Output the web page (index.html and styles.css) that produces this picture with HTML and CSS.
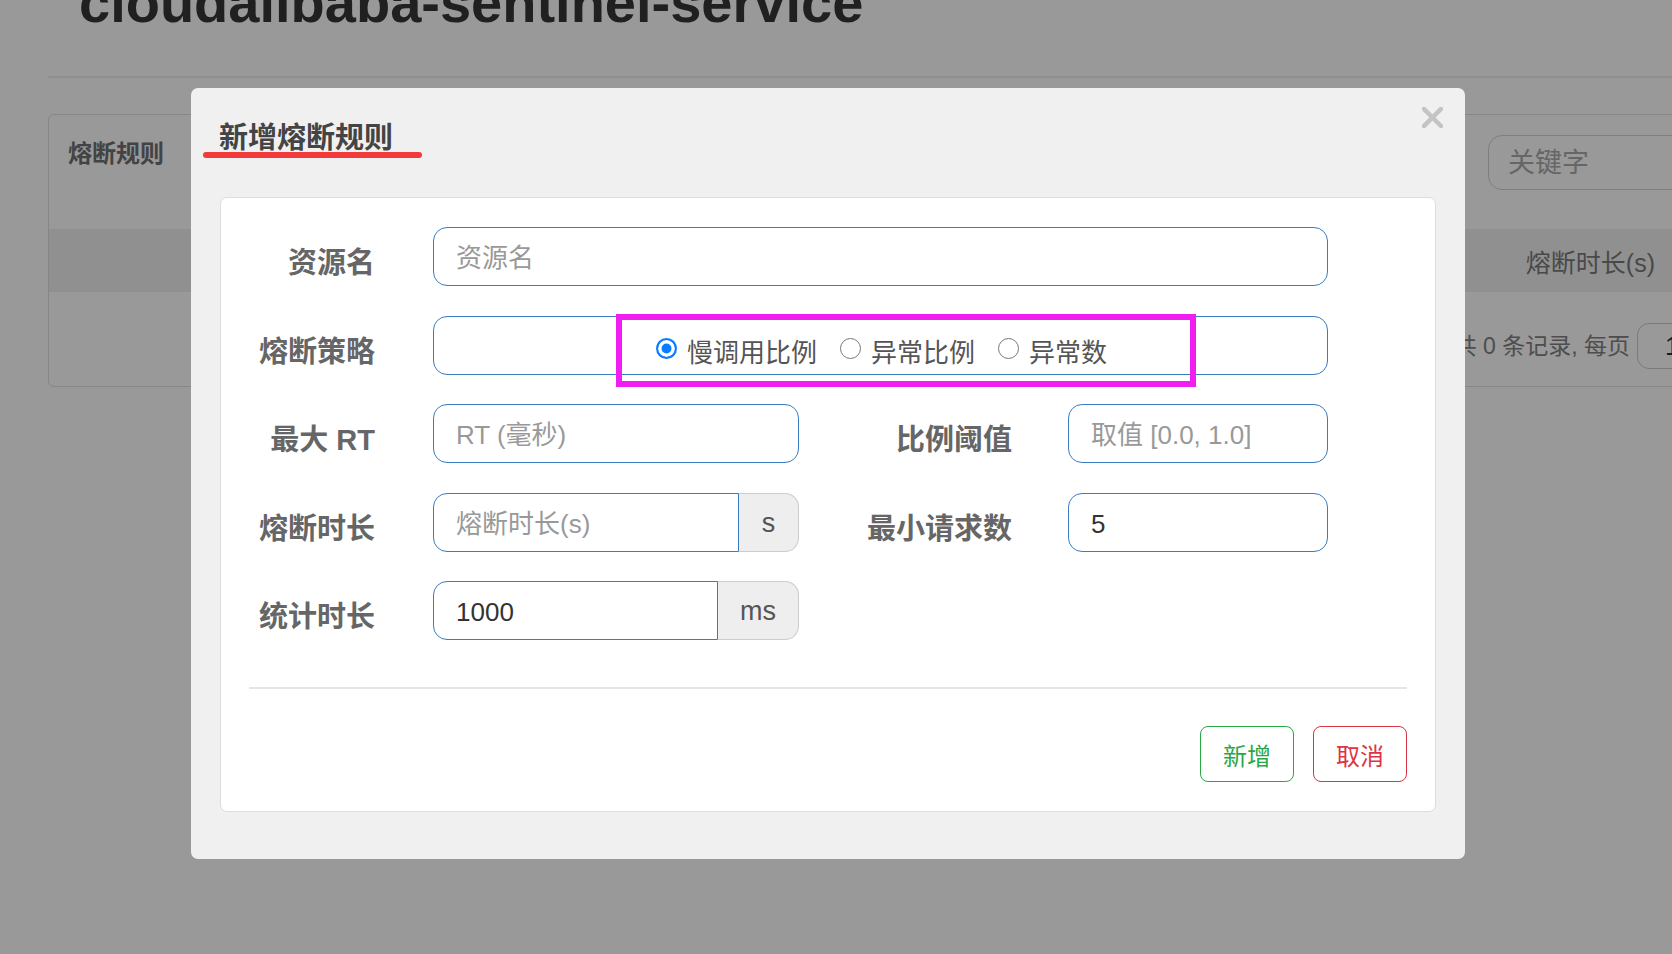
FILE: index.html
```html
<!DOCTYPE html>
<html lang="zh-CN">
<head>
<meta charset="utf-8">
<title>新增熔断规则</title>
<link rel="stylesheet" href="styles.css">
</head>
<body>
<div class="page">
  <h1 class="app-title">cloudalibaba-sentinel-service</h1>
  <div class="title-rule"></div>
  <div class="card">
    <div class="card-head">
      <span class="card-title">熔断规则</span>
      <div class="search">关键字</div>
    </div>
    <div class="table-head">
      <span class="th">熔断时长(s)</span>
    </div>
    <div class="table-foot">
      <span class="total">共 0 条记录, 每页</span>
      <span class="page-size">10</span>
    </div>
  </div>
</div>

<div class="backdrop"></div>

<div class="modal">
  <div class="modal-header">
    <h2 class="modal-title">新增熔断规则<span class="mark-underline"></span></h2>
    <button class="close" type="button" aria-label="关闭">
      <svg width="21" height="21" viewBox="0 0 21 21"><path d="M2 2 L19 19 M19 2 L2 19" stroke="#c4c4c4" stroke-width="4.5" stroke-linecap="square" fill="none"/></svg>
    </button>
  </div>
  <div class="modal-body">
    <div class="panel">
      <form class="rule-form">
        <label class="lbl">资源名</label>
        <div class="field wide"><input class="ctl" type="text" placeholder="资源名"></div>

        <label class="lbl">熔断策略</label>
        <div class="field wide radio-box">
          <label class="opt"><input type="radio" name="grade" checked><span>慢调用比例</span></label>
          <label class="opt"><input type="radio" name="grade"><span>异常比例</span></label>
          <label class="opt"><input type="radio" name="grade"><span>异常数</span></label>
          <span class="mark-box"></span>
        </div>

        <label class="lbl">最大 RT</label>
        <div class="field"><input class="ctl" type="text" placeholder="RT (毫秒)"></div>
        <label class="lbl lbl2">比例阈值</label>
        <div class="field"><input class="ctl" type="text" placeholder="取值 [0.0, 1.0]"></div>

        <label class="lbl">熔断时长</label>
        <div class="field group"><input class="ctl" type="text" placeholder="熔断时长(s)"><span class="addon addon-s">s</span></div>
        <label class="lbl lbl2">最小请求数</label>
        <div class="field"><input class="ctl" type="text" value="5"></div>

        <label class="lbl">统计时长</label>
        <div class="field group"><input class="ctl" type="text" value="1000"><span class="addon addon-ms">ms</span></div>
      </form>
      <div class="sep"></div>
      <div class="actions">
        <button class="btn btn-ok" type="button">新增</button>
        <button class="btn btn-cancel" type="button">取消</button>
      </div>
    </div>
  </div>
</div>
</body>
</html>
```

FILE: styles.css
```css
* { box-sizing: border-box; }
html, body { margin: 0; padding: 0; }
body {
  width: 1672px;
  height: 954px;
  overflow: hidden;
  position: relative;
  background: #fff;
  font-family: "Liberation Sans", "Noto Sans CJK SC", sans-serif;
  color: #333;
}

/* ---------- page behind the dialog ---------- */
.page { width: 1760px; padding-left: 48px; }
.app-title {
  margin: -28px 0 0 31px;
  font-size: 56px;
  line-height: 62px;
  font-weight: 700;
  color: #363636;
  white-space: nowrap;
}
.title-rule { height: 2px; background: #eee; margin-top: 42px; }
.card {
  margin-top: 36px;
  width: 1712px;
  border: 1px solid #e0e0e0;
  border-radius: 6px;
}
.card-head {
  height: 114px;
  display: flex;
  align-items: flex-start;
  padding: 21px 0 0 19px;
}
.card-title {
  font-size: 24px;
  line-height: 36px;
  font-weight: 700;
  color: #707070;
}
.search {
  margin-left: auto;
  margin-right: 51px;
  margin-top: -1px;
  width: 220px;
  height: 55px;
  border: 1px solid #d2d2d2;
  border-radius: 14px;
  padding-left: 19px;
  font-size: 27px;
  line-height: 55px;
  color: #aaa;
}
.table-head {
  height: 63px;
  background: #f0f0f0;
  display: flex;
  align-items: center;
  justify-content: flex-end;
  padding-right: 104px;
}
.th { font-size: 25px; color: #7a7a7a; }
.table-foot {
  height: 94px;
  display: flex;
  align-items: flex-start;
  justify-content: flex-end;
  padding: 31px 0 0 0;
  gap: 7px;
}
.total { font-size: 23px; line-height: 46px; color: #828282; }
.page-size {
  width: 122px;
  height: 46px;
  border: 1px solid #ccc;
  border-radius: 12px;
  padding-left: 27px;
  font-size: 26px;
  line-height: 44px;
  color: #2c2c2c;
}

.backdrop {
  position: fixed;
  inset: 0;
  background: rgba(0, 0, 0, 0.4);
}

/* ---------- dialog ---------- */
.modal {
  position: absolute;
  left: 191px;
  top: 88px;
  width: 1274px;
  height: 771px;
  background: #f0f0f0;
  border-radius: 7px;
}
.modal-header { position: relative; padding: 30px 28px 0; }
.modal-title {
  position: relative;
  display: inline-block;
  margin: 0;
  font-size: 29px;
  line-height: 40px;
  font-weight: 700;
  color: #444;
}
.mark-underline {
  position: absolute;
  left: -16px;
  top: 34px;
  width: 219px;
  height: 6px;
  border-radius: 3px;
  background: #f23a3a;
}
.close {
  position: absolute;
  right: 22px;
  top: 19px;
  width: 21px;
  height: 21px;
  padding: 0;
  border: 0;
  background: none;
  display: flex;
}
.modal-body { padding: 39px 29px 0; }
.panel {
  background: #fff;
  border: 1px solid #ddd;
  border-radius: 7px;
  padding: 29px 0 29px;
}
.rule-form {
  display: grid;
  grid-template-columns: 212px 366px 269px 260px;
  grid-auto-rows: 59px;
  row-gap: 29.5px;
}
.lbl {
  text-align: right;
  padding: 15px 58px 0 0;
  font-size: 29px;
  line-height: 42px;
  font-weight: 700;
  color: #666;
  white-space: nowrap;
}
.lbl2 { padding-right: 56px; }
.field { position: relative; display: flex; }
.wide { grid-column: 2 / 5; }
.ctl {
  width: 100%;
  height: 59px;
  margin: 0;
  border: 1px solid #3a7cc0;
  border-radius: 14px;
  padding: 4px 22px 0;
  font-family: inherit;
  font-size: 26px;
  color: #333;
  background: #fff;
  outline: none;
}
.ctl::placeholder { color: #999; }
.group .ctl { flex: 1; min-width: 0; border-radius: 14px 0 0 14px; }
.addon {
  flex: none;
  display: flex;
  align-items: center;
  justify-content: center;
  height: 59px;
  padding-top: 2px;
  background: #eee;
  border: 1px solid #ccc;
  border-left: 0;
  border-radius: 0 14px 14px 0;
  font-size: 27px;
  color: #555;
}
.addon-s { width: 60px; }
.addon-ms { width: 81px; }

.radio-box {
  border: 1px solid #3a7cc0;
  border-radius: 14px;
  align-items: center;
  justify-content: center;
  padding-left: 2px;
}
.opt {
  display: flex;
  align-items: center;
  font-size: 26px;
  color: #555;
  margin-right: 23px;
  position: relative;
  top: 3px;
}
.opt:last-of-type { margin-right: 0; }
.opt span { position: relative; top: 2px; }
.opt input {
  appearance: none;
  -webkit-appearance: none;
  width: 21px;
  height: 21px;
  margin: 0 10px 0 0;
  border: 1.5px solid #777;
  border-radius: 50%;
  background: #fff;
}
.opt input:checked {
  border: 2px solid #0a7cff;
  background: #0a7cff;
  box-shadow: inset 0 0 0 3.5px #fff;
}
.mark-box {
  position: absolute;
  left: 182px;
  top: -3px;
  width: 580px;
  height: 73px;
  border: 6px solid #f01ef0;
}

.sep {
  height: 2px;
  background: #e5e5e5;
  margin: 47px 28px 0 28px;
}
.actions {
  display: flex;
  justify-content: flex-end;
  gap: 19px;
  margin: 37px 28px 0 0;
}
.btn {
  width: 94px;
  height: 56px;
  padding: 0;
  background: #fff;
  border: 1px solid;
  border-radius: 8px;
  font-family: inherit;
  font-size: 24px;
}
.btn-ok { color: #28a745; border-color: #28a745; }
.btn-cancel { color: #dc3545; border-color: #dc3545; }
```
